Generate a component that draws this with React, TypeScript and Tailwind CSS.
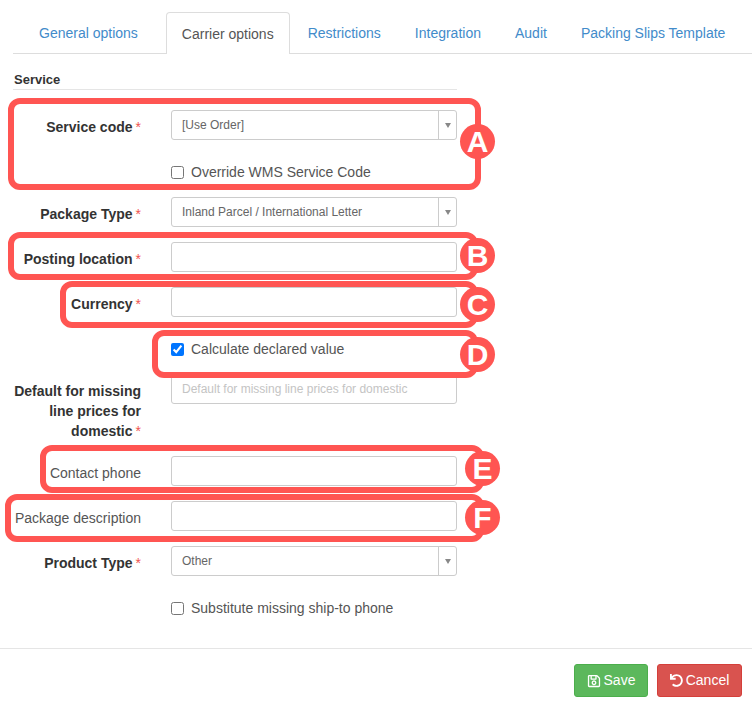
import { FaRegSave, FaUndo } from "react-icons/fa";

const font = "font-['Liberation_Sans',Arial,sans-serif]";

function Label({ text, required = true }: { text: React.ReactNode; required?: boolean }) {
  return (
    <div className={`pt-[7px] text-right text-[14px] leading-[20px] ${required ? "font-bold text-[#333]" : "text-[#555]"}`}>
      {text}
      {required && <span className="ml-[3px] font-normal text-[#ef5350]">*</span>}
    </div>
  );
}

function Row({ label, required = true, children }: { label?: React.ReactNode; required?: boolean; children: React.ReactNode }) {
  return (
    <div className="mb-[15px] grid grid-cols-[128px_286px] gap-x-[30px]">
      <div>{label && <Label text={label} required={required} />}</div>
      <div>{children}</div>
    </div>
  );
}

function Select({ value }: { value: string }) {
  return (
    <div className="flex h-[30px] rounded-[3px] border border-[#ccc] bg-white">
      <div className="flex-1 truncate pl-[10px] text-[12px] leading-[28px] text-[#666]">{value}</div>
      <div className="flex w-[18px] items-center justify-center border-l border-[#ccc]">
        <div className="h-0 w-0 border-x-[3.5px] border-t-[5px] border-x-transparent border-t-[#888]" />
      </div>
    </div>
  );
}

function Input({ placeholder }: { placeholder?: string }) {
  return (
    <input
      readOnly
      placeholder={placeholder}
      className="block h-[30px] w-full rounded-[3px] border border-[#ccc] bg-white px-[10px] text-[12px] text-[#555] placeholder:text-[#c4c4c4]"
    />
  );
}

function Check({ text, checked = false }: { text: string; checked?: boolean }) {
  return (
    <label className="mt-[22px] flex h-[20px] items-center gap-[7px] text-[14px] leading-[20px] text-[#555]">
      <input type="checkbox" readOnly checked={checked} className="m-0 h-[13px] w-[13px]" />
      {text}
    </label>
  );
}

function Mark({ box, letter, cx, cy }: { box: string; letter: string; cx: string; cy: string }) {
  return (
    <>
      <div className={`pointer-events-none absolute rounded-[12px] border-[6px] border-[#ff5552] ${box}`} />
      <div className={`pointer-events-none absolute flex h-[35px] w-[35px] items-center justify-center rounded-full bg-[#ff5552] text-[30px] font-bold leading-none text-white ${cx} ${cy}`}>
        {letter}
      </div>
    </>
  );
}

const tabs = ["Restrictions", "Integration", "Audit", "Packing Slips Template"];

export default function App() {
  return (
    <div className={`relative h-[712px] w-[752px] overflow-hidden bg-white ${font}`}>
      <div className="ml-[13px] mt-[12px] flex h-[42px] border-b border-[#ddd] pl-[10px] text-[14px] leading-[20px] whitespace-nowrap">
        <div className="shrink-0 px-[16px] pt-[11px] text-[#428bca]">General options</div>
        <div className="ml-[12px] h-[42px] shrink-0 rounded-t-[4px] border border-b-0 border-[#ddd] bg-white px-[15px] pt-[11px] text-[#555]">
          Carrier options
        </div>
        {tabs.map((t) => (
          <div key={t} className="ml-[2px] shrink-0 px-[16px] pt-[11px] text-[#428bca]">{t}</div>
        ))}
      </div>

      <div className="mx-[13px] mt-[15px] mb-[30px]">
        <div className="mb-[20px] w-[444px] border-b border-[#e5e5e5] pl-[1px] pt-[2px] text-[13px] font-bold leading-[18px] text-[#333]">
          Service
        </div>
        <Row label="Service code">
          <Select value="[Use Order]" />
          <Check text="Override WMS Service Code" />
        </Row>
        <Row label="Package Type">
          <Select value="Inland Parcel / International Letter" />
        </Row>
        <Row label="Posting location">
          <Input />
        </Row>
        <Row label="Currency">
          <Input />
          <Check text="Calculate declared value" checked />
        </Row>
        <Row label={<>Default for missing line prices for domestic</>}>
          <Input placeholder="Default for missing line prices for domestic" />
        </Row>
        <Row label="Contact phone" required={false}>
          <Input />
        </Row>
        <Row label="Package description" required={false}>
          <Input />
        </Row>
        <Row label="Product Type">
          <Select value="Other" />
          <Check text="Substitute missing ship-to phone" />
        </Row>
      </div>

      <div className="flex justify-end gap-[9px] border-t border-[#e5e5e5] pt-[15px] pr-[10px] text-[14px] text-white">
        <div className="flex h-[33px] w-[74px] items-center justify-center gap-[3px] rounded-[3px] border border-[#4cae4c] bg-[#5cb85c]">
          <FaRegSave className="h-[14px] w-[14px]" />
          Save
        </div>
        <div className="flex h-[33px] w-[85px] items-center justify-center gap-[3px] rounded-[3px] border border-[#d43f3a] bg-[#d9534f]">
          <FaUndo className="h-[13px] w-[13px]" />
          Cancel
        </div>
      </div>

      <Mark box="left-[8px] top-[98px] h-[92px] w-[473px]" letter="A" cx="left-[460px]" cy="top-[124px]" />
      <Mark box="left-[8px] top-[232px] h-[48px] w-[470px]" letter="B" cx="left-[460px]" cy="top-[238px]" />
      <Mark box="left-[60px] top-[281px] h-[47px] w-[418px]" letter="C" cx="left-[460px]" cy="top-[287px]" />
      <Mark box="left-[152px] top-[330px] h-[48px] w-[326px]" letter="D" cx="left-[460px]" cy="top-[337px]" />
      <Mark box="left-[40px] top-[445px] h-[48px] w-[444px]" letter="E" cx="left-[465px]" cy="top-[451px]" />
      <Mark box="left-[5px] top-[494px] h-[48px] w-[479px]" letter="F" cx="left-[465px]" cy="top-[500px]" />
    </div>
  );
}
